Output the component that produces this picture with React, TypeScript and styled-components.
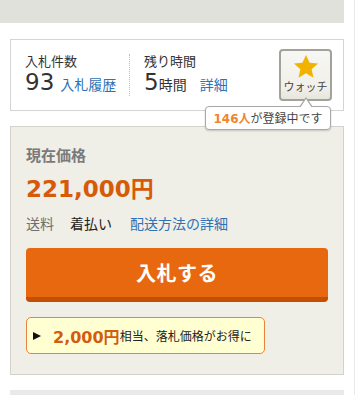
import React from "react";
import styled, { createGlobalStyle } from "styled-components";

const Global = createGlobalStyle`
  html, body { margin: 0; padding: 0; background: #fff; }
  body { font-family: "DejaVu Sans", "Noto Sans CJK JP", sans-serif; color: #333; }
`;

const Page = styled.div`
  display: flex;
  align-items: flex-start;
  width: 355px;
  height: 395px;
  overflow: hidden;
`;

const Main = styled.div`
  width: 344px;
  flex-shrink: 0;
  display: flex;
  flex-direction: column;
`;

const RightRule = styled.div`
  margin-left: 10px;
  width: 1px;
  height: 395px;
  background: #e8e8e8;
`;

const TopBand = styled.div`
  flex-shrink: 0;
  height: 23px;
  background: #e1e1db;
`;

const InfoBox = styled.div`
  flex-shrink: 0;
  position: relative;
  margin: 16px 0 0 10px;
  height: 72px;
  box-sizing: border-box;
  border: 1px solid #d4d4d4;
  background: #fff;
  display: flex;
  align-items: center;
  padding: 0 11px 0 14px;
  z-index: 2;
`;

const Stat = styled.div<{ $w?: number; $sep?: boolean }>`
  display: flex;
  flex-direction: column;
  width: ${(p) => (p.$w ? `${p.$w}px` : "auto")};
  padding-left: ${(p) => (p.$sep ? "14px" : "0")};
`;

const Separator = styled.div`
  width: 0;
  height: 42px;
  border-left: 1px dotted #bbb;
`;

const StatLabel = styled.div`
  font-family: "Noto Sans CJK JP", sans-serif;
  font-size: 13px;
  line-height: 17px;
  color: #333;
`;

const StatValue = styled.div`
  font-size: 23px;
  line-height: 27px;
  color: #333;
  white-space: nowrap;
`;

const Unit = styled.span`
  font-family: "Noto Sans CJK JP", sans-serif;
  font-size: 14px;
`;

const Link = styled.a<{ $gap: number }>`
  font-family: "Noto Sans CJK JP", sans-serif;
  font-size: 14px;
  color: #2f72b5;
  text-decoration: none;
  margin-left: ${(p) => p.$gap}px;
`;

const WatchButton = styled.div`
  margin-left: auto;
  width: 53px;
  height: 52px;
  box-sizing: border-box;
  border: 2px solid #a3a29a;
  border-radius: 4px;
  background: linear-gradient(#f7f7f3 0%, #f1f0ea 75%, #e6e5de 100%);
  display: flex;
  flex-direction: column;
  align-items: center;
  padding-top: 3px;
`;

const WatchText = styled.div`
  font-family: "Noto Sans CJK JP", sans-serif;
  font-size: 11px;
  line-height: 14px;
  color: #444;
`;

const Tooltip = styled.div`
  position: absolute;
  left: 194px;
  top: 66px;
  width: 126px;
  height: 24px;
  box-sizing: border-box;
  border: 1px solid #a8a8a8;
  border-radius: 4px;
  background: #fff;
  box-shadow: 0 1px 2px rgba(0, 0, 0, 0.18);
  font-family: "Noto Sans CJK JP", sans-serif;
  font-size: 12px;
  line-height: 22px;
  text-align: center;
  color: #444;
  white-space: nowrap;

  &::before,
  &::after {
    content: "";
    position: absolute;
    left: 93px;
    border-style: solid;
    border-color: transparent;
  }
  &::before {
    top: -10px;
    border-width: 0 7px 10px 7px;
    border-bottom-color: #a8a8a8;
  }
  &::after {
    top: -8px;
    left: 94px;
    border-width: 0 6px 9px 6px;
    border-bottom-color: #fff;
  }
`;

const Count = styled.span`
  font-family: "DejaVu Sans", "Noto Sans CJK JP", sans-serif;
  color: #f0862a;
  font-weight: bold;
`;

const PriceBox = styled.div`
  flex-shrink: 0;
  margin: 15px 0 0 10px;
  box-sizing: border-box;
  height: 249px;
  border: 1px solid #d3d2cb;
  background: #efeee7;
  padding: 18px 15px 0 15px;
  display: flex;
  flex-direction: column;
  align-items: flex-start;
`;

const PriceLabel = styled.div`
  font-family: "Noto Sans CJK JP", sans-serif;
  font-weight: bold;
  font-size: 15px;
  line-height: 20px;
  color: #7a7a7a;
`;

const Price = styled.div`
  margin-top: 10px;
  font-weight: bold;
  font-size: 23px;
  line-height: 28px;
  color: #d65a08;
`;

const ShipRow = styled.div`
  margin-top: 10px;
  display: flex;
  gap: 16px;
  font-family: "Noto Sans CJK JP", sans-serif;
  font-size: 14px;
  line-height: 20px;
`;

const ShipItem = styled.span<{ $tone: "label" | "value" | "link" }>`
  color: ${(p) =>
    p.$tone === "label" ? "#6e6e6e" : p.$tone === "link" ? "#2f72b5" : "#222"};
  margin-left: ${(p) => (p.$tone === "link" ? "2px" : "0")};
`;

const BidButton = styled.button`
  margin-top: 15px;
  width: 302px;
  height: 54px;
  box-sizing: border-box;
  border: none;
  border-bottom: 5px solid #c25000;
  border-radius: 4px;
  background: #e8680f;
  color: #fff;
  font-family: "Noto Sans CJK JP", sans-serif;
  font-weight: bold;
  font-size: 20px;
  letter-spacing: 0.5px;
  padding: 0;
  cursor: pointer;
`;

const Notice = styled.div`
  margin-top: 15px;
  height: 37px;
  box-sizing: border-box;
  border: 1px solid #e8843c;
  border-radius: 5px;
  background: #ffffd2;
  display: flex;
  align-items: center;
  padding: 0 12px 0 6px;
  white-space: nowrap;
`;

const Arrow = styled.span`
  width: 0;
  height: 0;
  border-style: solid;
  border-width: 4.5px 0 4.5px 8px;
  border-color: transparent transparent transparent #111;
  margin-right: 12px;
`;

const Bonus = styled.span`
  font-weight: bold;
  font-size: 16px;
  color: #d45c0e;
`;

const BonusText = styled.span`
  font-family: "Noto Sans CJK JP", sans-serif;
  font-size: 12px;
  color: #222;
`;

const BottomBand = styled.div`
  flex-shrink: 0;
  margin: 15px 0 0 10px;
  height: 40px;
  background: #e9e9e9;
`;

const Star = () => (
  <svg width="26" height="25" viewBox="0 0 24 23">
    <path
      d="M12 0.8l3.3 7.2 7.8.8-5.9 5.3 1.7 7.7L12 17.8l-6.9 4 1.7-7.7L.9 8.8l7.8-.8z"
      fill="#f2b300"
    />
  </svg>
);

export default function App() {
  return (
    <>
      <Global />
      <Page>
        <Main>
          <TopBand />
          <InfoBox>
            <Stat $w={104}>
              <StatLabel>入札件数</StatLabel>
              <StatValue>
                93<Link $gap={6}>入札履歴</Link>
              </StatValue>
            </Stat>
            <Separator />
            <Stat $sep>
              <StatLabel>残り時間</StatLabel>
              <StatValue>
                5<Unit>時間</Unit>
                <Link $gap={13}>詳細</Link>
              </StatValue>
            </Stat>
            <WatchButton>
              <Star />
              <WatchText>ウォッチ</WatchText>
            </WatchButton>
            <Tooltip>
              <Count>146人</Count>が登録中です
            </Tooltip>
          </InfoBox>
          <PriceBox>
            <PriceLabel>現在価格</PriceLabel>
            <Price>221,000円</Price>
            <ShipRow>
              <ShipItem $tone="label">送料</ShipItem>
              <ShipItem $tone="value">着払い</ShipItem>
              <ShipItem $tone="link">配送方法の詳細</ShipItem>
            </ShipRow>
            <BidButton>入札する</BidButton>
            <Notice>
              <Arrow />
              <Bonus>2,000円</Bonus>
              <BonusText>相当、落札価格がお得に</BonusText>
            </Notice>
          </PriceBox>
          <BottomBand />
        </Main>
        <RightRule />
      </Page>
    </>
  );
}
